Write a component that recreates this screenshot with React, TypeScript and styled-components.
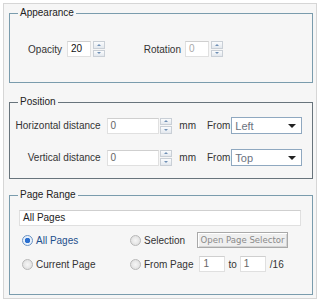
import React from "react";
import styled, { createGlobalStyle } from "styled-components";

const GlobalStyle = createGlobalStyle`
  html, body {
    margin: 0;
    padding: 0;
    background: #ffffff;
  }
  body {
    font-family: "Liberation Sans", Arial, sans-serif;
    font-size: 10px;
    color: #333;
  }
`;

const Panel = styled.div`
  box-sizing: border-box;
  width: 314px;
  height: 296px;
  margin: 3px 0 0 3px;
  border: 1px solid #d6d6d6;
  background: #f6f6f6;
  padding: 2px 0 0 5px;
  display: flex;
  flex-direction: column;
`;

const Group = styled.fieldset<{ $line: string; $h: number; $top?: number; $pl?: number }>`
  box-sizing: border-box;
  width: 304px;
  height: ${(p) => p.$h}px;
  margin: ${(p) => p.$top ?? 0}px 0 0 0;
  border: 1px solid ${(p) => p.$line};
  padding: 0 10px 0 ${(p) => p.$pl ?? 10}px;
  min-width: 0;
`;

const Legend = styled.legend<{ $ml?: number }>`
  padding: 0 2px;
  margin-left: ${(p) => p.$ml ?? -2}px;
  font-size: 10px;
  line-height: 14px;
  color: #222;
`;

const Row = styled.div<{ $top?: number }>`
  display: flex;
  align-items: center;
  margin-top: ${(p) => p.$top ?? 0}px;
`;

const Label = styled.span<{ $w?: number; $blue?: boolean }>`
  display: inline-block;
  width: ${(p) => (p.$w ? `${p.$w}px` : "auto")};
  text-align: right;
  white-space: nowrap;
  color: ${(p) => (p.$blue ? "#1d4f8c" : "#333")};
`;

const Text = styled.span<{ $ml?: number }>`
  margin-left: ${(p) => p.$ml ?? 0}px;
  white-space: nowrap;
  color: #333;
`;

const Field = styled.div<{ $w: number; $ml?: number; $ink?: string }>`
  box-sizing: border-box;
  width: ${(p) => p.$w}px;
  height: 16px;
  margin-left: ${(p) => p.$ml ?? 0}px;
  background: #fff;
  border: 1px solid #e0e0e0;
  border-top-color: #cfcfcf;
  padding: 0 3px;
  line-height: 13px;
  color: ${(p) => p.$ink ?? "#666"};
  white-space: nowrap;
`;

const Spin = styled.div<{ $ml?: number }>`
  box-sizing: border-box;
  width: 12px;
  height: 16px;
  margin-left: ${(p) => p.$ml ?? 2}px;
  display: flex;
  flex-direction: column;
  gap: 1px;
`;

const SpinBtn = styled.div`
  flex: 1;
  border: 1px solid #c9cfd6;
  background: linear-gradient(#fbfcfd, #e3e8ee);
  display: flex;
  align-items: center;
  justify-content: center;
`;

const Arrow = styled.span<{ $down?: boolean }>`
  width: 0;
  height: 0;
  border-left: 2px solid transparent;
  border-right: 2px solid transparent;
  ${(p) =>
    p.$down
      ? "border-top: 2px solid #6f8fb5;"
      : "border-bottom: 2px solid #6f8fb5;"}
`;

const Select = styled.div`
  box-sizing: border-box;
  width: 71px;
  height: 17px;
  margin-left: 1px;
  background: #fff;
  border: 1px solid #8fa8c0;
  display: flex;
  align-items: center;
  justify-content: space-between;
  padding: 0 5px 0 3px;
  font-size: 11px;
  color: #6b7280;
`;

const Caret = styled.span`
  width: 0;
  height: 0;
  border-left: 4px solid transparent;
  border-right: 4px solid transparent;
  border-top: 4px solid #222;
`;

const Radio = styled.span<{ $on?: boolean }>`
  box-sizing: border-box;
  width: 11px;
  height: 11px;
  border-radius: 50%;
  border: 1px solid ${(p) => (p.$on ? "#6b93c4" : "#b8b8b8")};
  background: ${(p) =>
    p.$on
      ? "radial-gradient(circle, #2a6fd0 0 2.5px, #e8f1fb 3px)"
      : "radial-gradient(circle, #f6f6f6, #dadada)"};
  margin-right: 3px;
  flex: none;
`;

const Choice = styled.label<{ $w: number; $ml?: number }>`
  display: flex;
  align-items: center;
  width: ${(p) => p.$w}px;
  margin-left: ${(p) => p.$ml ?? 0}px;
  flex: none;
`;

const Button = styled.div`
  box-sizing: border-box;
  width: 91px;
  height: 16px;
  margin-left: 3px;
  border: 1px solid #a9a9a9;
  box-shadow: inset 1px 1px #fff, inset -1px -1px #d4d4d4;
  background: #efefef;
  font-family: "DejaVu Sans Condensed", "DejaVu Sans", sans-serif;
  font-stretch: condensed;
  font-size: 9.5px;
  line-height: 14px;
  text-align: center;
  color: #8a8a8a;
  white-space: nowrap;
  overflow: hidden;
`;

const Spinner = ({ ml }: { ml?: number }) => (
  <Spin $ml={ml}>
    <SpinBtn>
      <Arrow />
    </SpinBtn>
    <SpinBtn>
      <Arrow $down />
    </SpinBtn>
  </Spin>
);

export default function App() {
  return (
    <>
      <GlobalStyle />
      <Panel>
        <Group $line="#7a9cad" $h={77}>
          <Legend>Appearance</Legend>
          <Row $top={21}>
            <Label $w={42}>Opacity</Label>
            <Field $w={24} $ml={5} $ink="#111">
              20
            </Field>
            <Spinner />
            <Label $w={76}>Rotation</Label>
            <Field $w={24} $ml={4} $ink="#aaa">
              0
            </Field>
            <Spinner />
          </Row>
        </Group>

        <Group $line="#68747c" $h={84} $top={12} $pl={5}>
          <Legend $ml={3}>Position</Legend>
          <Row $top={8}>
            <Label $w={86}>Horizontal distance</Label>
            <Field $w={53} $ml={6}>0</Field>
            <Spinner ml={1} />
            <Text $ml={7}>mm</Text>
            <Text $ml={11}>From</Text>
            <Select>
              Left
              <Caret />
            </Select>
          </Row>
          <Row $top={15}>
            <Label $w={86}>Vertical distance</Label>
            <Field $w={53} $ml={6}>0</Field>
            <Spinner ml={1} />
            <Text $ml={7}>mm</Text>
            <Text $ml={11}>From</Text>
            <Select>
              Top
              <Caret />
            </Select>
          </Row>
        </Group>

        <Group $line="#7a9cad" $h={107} $top={9}>
          <Legend>Page Range</Legend>
          <Row $top={8}>
            <Field $w={282} $ml={-1} $ink="#222">
              All Pages
            </Field>
          </Row>
          <Row $top={6}>
            <Choice $w={108} $ml={2}>
              <Radio $on />
              <Label $blue>All Pages</Label>
            </Choice>
            <Choice $w={64}>
              <Radio />
              <Label>Selection</Label>
            </Choice>
            <Button>Open Page Selector</Button>
          </Row>
          <Row $top={8}>
            <Choice $w={108} $ml={2}>
              <Radio />
              <Label>Current Page</Label>
            </Choice>
            <Radio />
            <Label>From Page</Label>
            <Field $w={26} $ml={6}>1</Field>
            <Text $ml={3}>to</Text>
            <Field $w={26} $ml={3}>1</Field>
            <Text $ml={4}>/16</Text>
          </Row>
        </Group>
      </Panel>
    </>
  );
}
